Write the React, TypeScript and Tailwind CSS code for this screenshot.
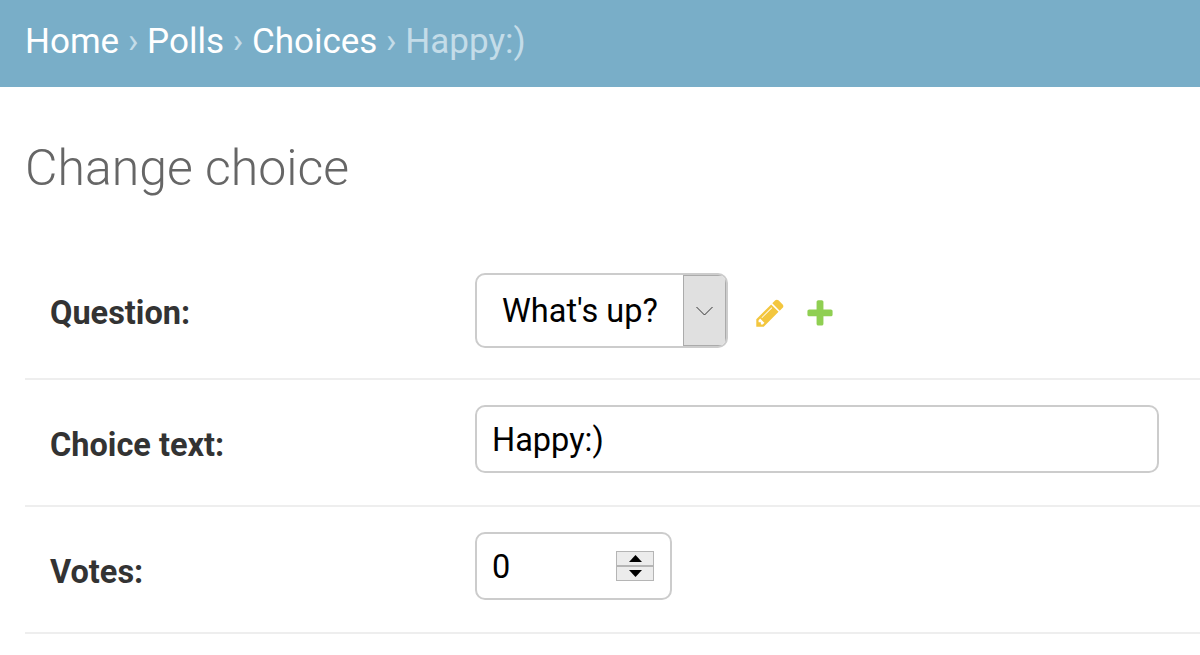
function Row({ label, labelClass, children }: { label: string; labelClass: string; children: React.ReactNode }) {
  return (
    <div className="flex items-center border-b-2 border-[#eeeeee] pl-[25px]">
      <div className={`w-[425px] shrink-0 text-[32.5px] font-bold text-[#333333] ${labelClass}`}>{label}</div>
      {children}
    </div>
  );
}

function App() {
  return (
    <div className="h-[655px] w-[1200px] overflow-hidden bg-white font-['Roboto',sans-serif]">
      {/* breadcrumbs */}
      <div className="flex h-[87px] items-center gap-[8.7px] bg-[#79aec8] px-[25px] pb-[2px] text-[35px] text-white">
        <span>Home</span>
        <span className="text-[#c4dce8]">›</span>
        <span>Polls</span>
        <span className="text-[#c4dce8]">›</span>
        <span>Choices</span>
        <span className="text-[#c4dce8]">›</span>
        <span className="text-[#c4dce8]">Happy:)</span>
      </div>

      <h1 className="mt-[51px] ml-[25px] text-[50px] leading-[60px] font-light text-[#666666]">Change choice</h1>

      <div className="mt-[47px] ml-[25px]">
        <Row label="Question:" labelClass="pt-[4px]">
          <div className="mt-[28px] mb-[30px] flex h-[75px] w-[253px] overflow-hidden rounded-[10px] border-2 border-[#cccccc] bg-white">
            <div className="flex flex-1 items-center pt-[2px] pl-[25px] text-[32.5px] text-black">What's up?</div>
            <div className="flex w-[43px] items-center justify-center border border-[#ababab] bg-[#e0e0e0]">
              <svg width="17" height="10" viewBox="0 0 17 10" fill="none" stroke="#333333" strokeWidth="1">
                <path d="M0.5 1 L8.5 9 L16.5 1" />
              </svg>
            </div>
          </div>
          <div className="ml-[26px] flex items-center gap-[18px] pt-[2px]">
            <svg width="32" height="32" viewBox="0 0 1792 1792" fill="#f3c63e">
              <path d="M491 1536l91-91-235-235-91 91v107h128v128h107zm523-928q0-22-22-22-10 0-17 7l-542 542q-7 7-7 17 0 22 22 22 10 0 17-7l542-542q7-7 7-17zm-54-192l416 416-832 832h-416v-416zm683 96q0 53-37 90l-166 166-416-416 166-165q36-38 90-38 53 0 91 38l235 234q37 39 37 91z" />
            </svg>
            <svg width="32" height="32" viewBox="0 0 1792 1792" fill="#8fcf52">
              <path d="M1600 796v192q0 40-28 68t-68 28h-416v416q0 40-28 68t-68 28h-192q-40 0-68-28t-28-68v-416h-416q-40 0-68-28t-28-68v-192q0-40 28-68t68-28h416v-416q0-40 28-68t68-28h192q40 0 68 28t28 68v416h416q40 0 68 28t28 68z" />
            </svg>
          </div>
        </Row>

        <Row label="Choice text:" labelClass="pt-[6px]">
          <div className="mt-[25px] mb-[32px] flex h-[68px] w-[684px] items-center rounded-[10px] border-2 border-[#cccccc] pl-[15px] text-[32.5px] text-black">
            <span className="pt-[2px]">Happy:)</span>
          </div>
        </Row>

        <Row label="Votes:" labelClass="pt-[6px]">
          <div className="mt-[25px] mb-[32px] flex h-[68px] w-[197px] items-center justify-between rounded-[10px] border-2 border-[#cccccc] pr-[16px] pl-[15px] text-[32.5px] text-black">
            <span className="pt-[2px]">0</span>
            <div className="flex h-[30px] w-[38px] flex-col border border-[#b5b5b5] bg-[#ececec]">
              <div className="flex flex-1 items-center justify-center border-b-2 border-[#b5b5b5]">
                <svg width="13" height="7" viewBox="0 0 13 7"><path d="M6.5 0 L13 7 L0 7 Z" fill="#000" /></svg>
              </div>
              <div className="flex flex-1 items-center justify-center">
                <svg width="13" height="7" viewBox="0 0 13 7"><path d="M0 0 L13 0 L6.5 7 Z" fill="#000" /></svg>
              </div>
            </div>
          </div>
        </Row>
      </div>
    </div>
  );
}

export default App;
